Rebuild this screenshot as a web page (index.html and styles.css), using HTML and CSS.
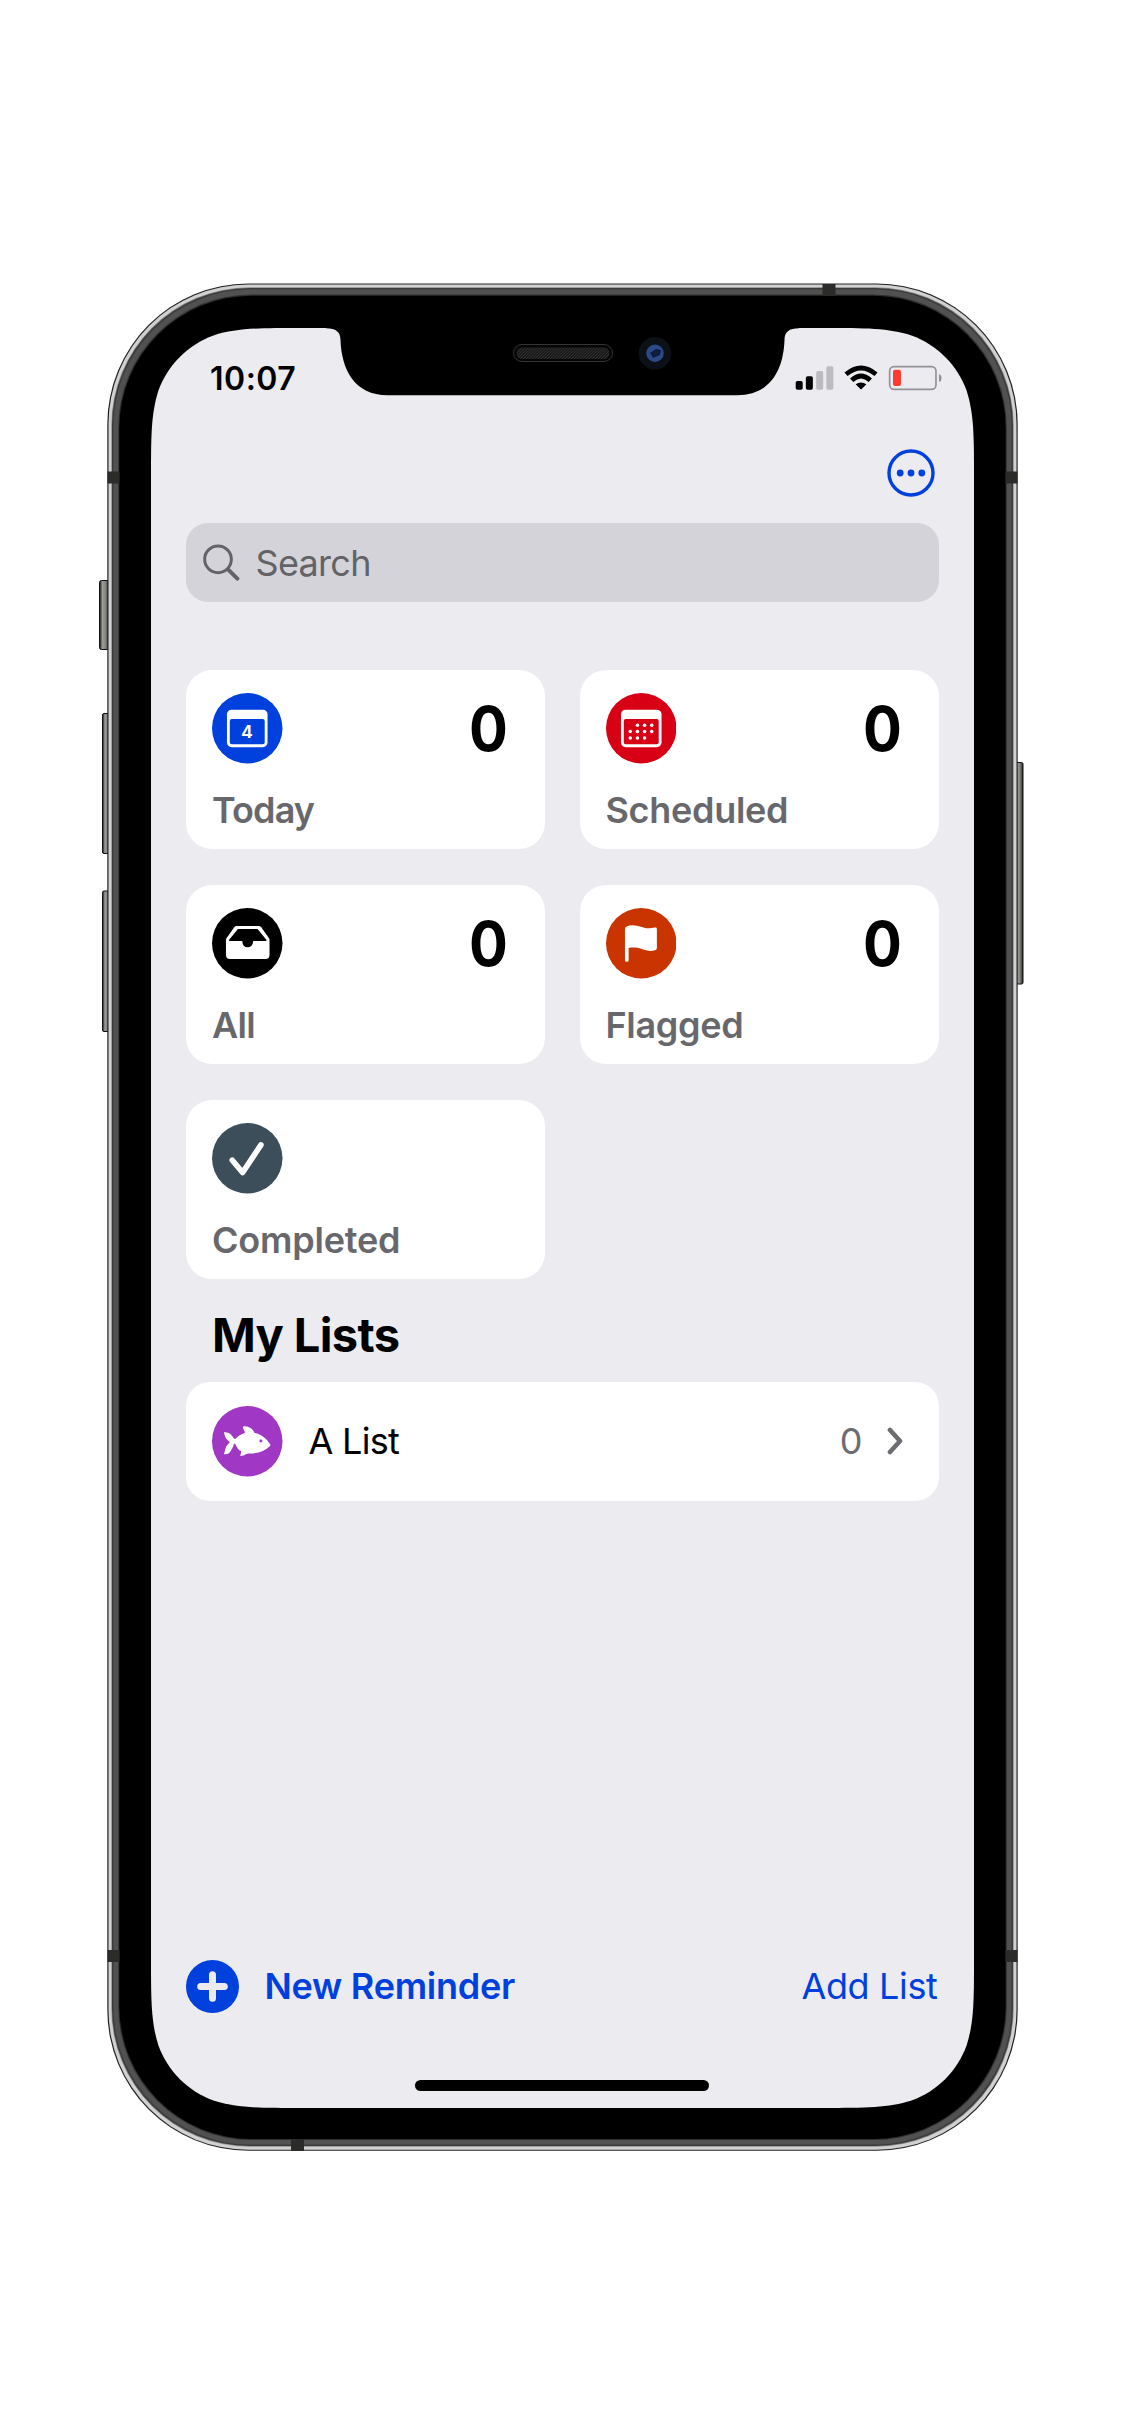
FILE: index.html
```html
<!DOCTYPE html>
<html lang="en">
<head>
<meta charset="utf-8">
<title>Reminders</title>
<link rel="stylesheet" href="styles.css">
</head>
<body>
<main class="stage">
  <svg class="device" viewBox="0 0 1125 2436" aria-hidden="true">
    <defs>
      <path id="display" d="M302.34 328H822.66C866.24 328 888.03 328 911.48 335.42C937.09 344.74 957.26 364.91 966.58 390.52C974 413.97 974 435.76 974 479.34V1956.66C974 2000.24 974 2022.03 966.58 2045.48C957.26 2071.09 937.09 2091.26 911.48 2100.58C888.03 2108 866.24 2108 822.66 2108H302.34C258.76 2108 236.97 2108 213.52 2100.58C187.91 2091.26 167.74 2071.09 158.42 2045.48C151 2022.03 151 2000.24 151 1956.66V479.34C151 435.76 151 413.97 158.42 390.52C167.74 364.91 187.91 344.74 213.52 335.42C236.97 328 258.76 328 302.34 328Z"/>
      <linearGradient id="metal"><stop offset="0" stop-color="#111"/><stop offset=".3" stop-color="#9c9c98"/><stop offset=".6" stop-color="#858580"/><stop offset="1" stop-color="#222"/></linearGradient>
      <pattern id="mesh" width="3" height="3" patternUnits="userSpaceOnUse"><rect width="3" height="3" fill="#1b1b1b"/><path d="M0 3L3 0" stroke="#333" stroke-width=".8"/></pattern>
    </defs>
    <g fill="url(#metal)" stroke="#111" stroke-width="1">
      <rect x="99.5" y="580.5" width="10" height="69" rx="2"/>
      <rect x="102.5" y="713.5" width="8" height="140" rx="1.5"/>
      <rect x="102.5" y="891" width="8" height="140.500" rx="1.5"/>
      <rect x="1015" y="762.500" width="8" height="221.500" rx="1.5"/>
    </g>
    <rect x="107.300" y="283.500" width="910.400" height="1867.300" rx="141" fill="#222"/>
    <rect x="108.500" y="284.500" width="908" height="1865.300" rx="140" fill="#d2d0d2"/>
    <rect x="111.300" y="287.300" width="902.400" height="1859.400" rx="138" fill="#8c8c8c"/>
    <rect x="112" y="288" width="901" height="1858" rx="137.500" fill="#3c3c3c"/>
    <rect x="113.500" y="289.500" width="898" height="1855" rx="136.500" fill="#515151"/>
    <rect x="118.300" y="294.500" width="888.400" height="1845.500" rx="133" fill="#2e2e2e"/>
    <rect x="119.300" y="295.700" width="886.400" height="1843.300" rx="132.500"/>
    <g fill="#2b2b29">
      <rect x="107.500" y="471.500" width="12" height="12"/><rect x="1005.500" y="471.500" width="12" height="12"/>
      <rect x="107.500" y="1950" width="12" height="12"/><rect x="1005.500" y="1950" width="12" height="12"/>
      <rect x="822.500" y="284" width="13" height="12"/><rect x="291" y="2139" width="13" height="12"/>
    </g>
    <use href="#display" fill="#ebebf0"/>
    <path d="M326 327V328.200C336 328.200 340.500 332 340.500 340C341.500 369 354 395.300 388 395.300H737C771 395.300 783.500 369 784.500 340C784.500 332 789 328.200 799 328.200V327Z"/>
    <rect x="513.500" y="344.500" width="99" height="17" rx="8.500" fill="#050505" stroke="#333"/>
    <rect x="516.500" y="347.500" width="93" height="11.500" rx="5.500" fill="url(#mesh)"/>
    <circle cx="655" cy="353.200" r="16.300" fill="#0c1017"/>
    <circle cx="655" cy="353.200" r="8.700" fill="#2b4a8a"/>
    <path d="M650 353l6-4 5 1-1 5-7 3z" fill="#0f1c3c"/>
  </svg>

  <section class="screen">
    <header class="status">
      <span class="time">10:07</span>
      <svg class="status-icons" viewBox="346 286 444 77">
        <rect x="348" y="334" width="21" height="26" rx="5"/><rect x="378.500" y="320" width="21" height="40" rx="5"/>
        <g fill="#bcbcc0"><rect x="409.500" y="304" width="21" height="56" rx="5"/><rect x="440" y="290" width="21" height="70" rx="5"/></g>
        <g fill="none" stroke="#000" stroke-width="14"><path d="M499 314Q544 276 589 314"/><path d="M516 332Q544 306 572 332"/></g>
        <path d="M528 344Q544 333 560 344L546 358Q544 360 542 358Z"/>
        <rect x="630" y="291" width="139" height="68" rx="13" fill="none" stroke="#929297" stroke-width="5"/>
        <rect x="640" y="300" width="24" height="49" rx="6" fill="#ff3b30"/>
        <path d="M778 313Q786 316 786 325T778 337Z" fill="#929297"/>
      </svg>
    </header>

    <div class="toolbar">
      <svg class="more" viewBox="0 0 48 48"><circle cx="24" cy="24" r="22" fill="none" stroke="#0040dd" stroke-width="3.400"/><g fill="#0040dd"><circle cx="13.200" cy="24" r="3.400"/><circle cx="24" cy="24" r="3.400"/><circle cx="34.800" cy="24" r="3.400"/></g></svg>
    </div>

    <div class="search">
      <svg class="search-icon" viewBox="340 820 111 111" fill="none" stroke="#636367" stroke-linecap="round"><circle cx="385" cy="866" r="40" stroke-width="9"/><path d="M415 896L443 924" stroke-width="12"/></svg>
      <span class="search-text">Search</span>
    </div>

    <div class="cards">
      <article class="card">
        <svg class="icon" viewBox="0 0 212 212"><circle cx="106" cy="106" r="106" fill="#0040dd"/><rect x="45" y="50" width="122" height="113" rx="14" fill="#fff"/><rect x="53.500" y="78" width="105" height="76" rx="6" fill="#0040dd"/><text class="day" x="105" y="136">4</text></svg>
        <span class="count">0</span>
        <h2 class="label today">Today</h2>
      </article>
      <article class="card">
        <svg class="icon" viewBox="0 0 212 212"><circle cx="106" cy="106" r="106" fill="#d70015"/><rect x="45" y="50" width="122" height="113" rx="14" fill="#fff"/><rect x="53.500" y="78" width="105" height="76" rx="6" fill="#d70015"/><g fill="#fff"><circle cx="94.500" cy="97" r="5.300"/><circle cx="116" cy="97" r="5.300"/><circle cx="137.500" cy="97" r="5.300"/><circle cx="73" cy="116" r="5.300"/><circle cx="94.500" cy="116" r="5.300"/><circle cx="116" cy="116" r="5.300"/><circle cx="137.500" cy="116" r="5.300"/><circle cx="73" cy="135" r="5.300"/><circle cx="94.500" cy="135" r="5.300"/><circle cx="116" cy="135" r="5.300"/></g></svg>
        <span class="count">0</span>
        <h2 class="label scheduled">Scheduled</h2>
      </article>
      <article class="card">
        <svg class="icon" viewBox="0 0 212 212"><circle cx="106" cy="106" r="106"/><path fill="#fff" d="M74 54H140Q145 54 148 58L171 90Q173 93 173 97V141Q173 153 161 153H54Q42 153 42 141V97Q42 93 44 90L67 58Q70 54 74 54Z"/><path d="M78 63H137L164 96Q165 99 162 99H124Q122 118 107 118Q92 118 91 99H53Q50 99 51 96Z"/></svg>
        <span class="count">0</span>
        <h2 class="label all">All</h2>
      </article>
      <article class="card">
        <svg class="icon" viewBox="0 0 212 212"><circle cx="106" cy="106" r="106" fill="#c93400"/><path fill="#fff" d="M57 63Q58 52 80 52C100 52 112 62 130 61C140 61 146 59 149 59Q153 59 153 63V120Q153 125 147 127C132 132 120 127 108 123C92 118 80 118 68 120V157Q68 162 62.500 162Q57 162 57 157Z"/></svg>
        <span class="count">0</span>
        <h2 class="label flagged">Flagged</h2>
      </article>
      <article class="card">
        <svg class="icon" viewBox="0 0 212 212"><circle cx="106" cy="106" r="106" fill="#3c4e5a"/><path d="M61 112L92 149L147 66" fill="none" stroke="#fff" stroke-width="17" stroke-linecap="round" stroke-linejoin="round"/></svg>
        <h2 class="label completed">Completed</h2>
      </article>
    </div>

    <h1 class="heading">My Lists</h1>

    <div class="list">
      <svg class="icon" viewBox="0 0 212 212"><circle cx="106" cy="106" r="106" fill="#a038c5"/><path fill="#fff" d="M36 79C50 77 60 86 66 98L70 99C78 90 88 84 99 81Q98 74 93 66Q92 60 99 61C115 63 124 71 128 81C150 84 165 100 175 115Q177 119 173 122C158 135 138 144 110 143Q102 144 97 148Q91 150 85 150L88 136C80 133 74 123 70 114L66 113C64 124 58 134 51 142Q45 146 36 145Q35 143 38 138C40 124 46 115 54 109C43 102 38 92 36 79Z"/><circle cx="147" cy="105" r="4.500" fill="#a038c5"/></svg>
      <span class="list-name">A List</span>
      <span class="list-count">0</span>
      <svg class="chevron" viewBox="0 0 16 28"><path d="M3 3L13 14L3 25" fill="none" stroke="#6c6c71" stroke-width="4.600" stroke-linecap="round" stroke-linejoin="round"/></svg>
    </div>

    <footer class="actions">
      <svg class="plus" viewBox="0 0 159 159"><circle cx="79.500" cy="79.500" r="79.500" fill="#0040dd"/><path d="M79.500 44V115M44 79.500H115" stroke="#ebebf0" stroke-width="21" stroke-linecap="round"/></svg>
      <span class="new">New Reminder</span>
      <span class="add">Add List</span>
    </footer>
    <div class="home"></div>
  </section>
</main>
</body>
</html>
```
FILE: styles.css
```css
* { box-sizing: border-box; margin: 0; }

body {
  background: #fff;
  font-family: Inter, "Liberation Sans", sans-serif;
  color: #000;
}

.stage {
  display: grid;
  width: 1125px;
  height: 2436px;
  overflow: hidden;
}

/* The device artwork and the display share one grid cell. */
.device, .screen { grid-area: 1 / 1; }

.device { width: 1125px; height: 2436px; }

.screen {
  display: flex;
  flex-direction: column;
  width: 823px;
  height: 1780px;
  margin: 328px 0 0 151px;
  padding: 0 35.5px 17px 35px;
}

.screen svg { display: block; flex: none; }

.status {
  display: flex;
  justify-content: space-between;
  align-items: center;
  height: 100px;
  padding-left: 24px;
}

.time { padding-top: 2px; font-size: 32px; line-height: 40px; font-weight: 600; letter-spacing: 0.5px; }
.status-icons { width: 148px; height: 25.67px; margin-right: -4.5px; }

.toolbar {
  display: flex;
  justify-content: flex-end;
  align-items: center;
  height: 90px;
  padding-right: 4px;
}
.more { width: 48px; height: 48px; }

.search {
  display: flex;
  align-items: center;
  gap: 15.5px;
  height: 79px;
  margin-top: 5px;
  padding-left: 17px;
  border-radius: 22px;
  background: #d4d3d9;
  color: #636367;
}
.search-icon { width: 37px; height: 37px; }
.search-text { font-size: 36px; line-height: 44px; letter-spacing: -0.7px; }

.cards {
  display: grid;
  grid-template-columns: 1fr 1fr;
  grid-auto-rows: 179px;
  gap: 36px 34.5px;
  margin-top: 68px;
}

.card {
  display: grid;
  grid-template-columns: 1fr auto;
  grid-template-rows: 70.5px 1fr;
  padding: 23px 37px 0 26px;
  border-radius: 26px;
  background: #fff;
}

.icon { width: 70.5px; height: 70.5px; }
.day { font-size: 51px; font-weight: 700; fill: #fff; text-anchor: middle; }

.count {
  font-size: 62px;
  line-height: 71px;
  font-weight: 700;
  transform: scaleX(0.93);
  transform-origin: right;
}

.label {
  grid-column: 1 / -1;
  margin-top: 24px;
  font-size: 36px;
  line-height: 44px;
  font-weight: 600;
  color: #68686c;
}
.today { letter-spacing: -0.9px; }
.scheduled, .flagged { letter-spacing: -0.3px; }
.all { letter-spacing: -0.7px; }
.completed { letter-spacing: -0.2px; }

.heading {
  height: 103px;
  padding: 28px 0 0 26px;
  font-size: 47px;
  line-height: 56px;
  font-weight: 700;
  letter-spacing: -0.65px;
}

.list {
  display: flex;
  align-items: center;
  height: 118.5px;
  padding: 0 36px 0 26px;
  border-radius: 24px;
  background: #fff;
}
.list-name { margin-left: 26px; font-size: 36px; line-height: 44px; letter-spacing: -0.7px; }
.list-count { margin-left: auto; font-size: 36px; line-height: 44px; color: #6c6c71; }
.chevron { width: 16px; height: 28px; margin-left: 24px; }

.actions {
  display: flex;
  align-items: center;
  height: 53px;
  margin-top: auto;
  color: #0040dd;
  font-size: 36px;
  line-height: 44px;
}
.plus { width: 53px; height: 53px; }
.new { margin-left: 25.5px; font-weight: 600; letter-spacing: -0.25px; }
.add { margin-left: auto; padding-right: 1px; letter-spacing: -0.35px; }

.home {
  width: 294px;
  height: 11.5px;
  margin: 67px auto 0;
  border-radius: 6px;
  background: #000;
}
```
